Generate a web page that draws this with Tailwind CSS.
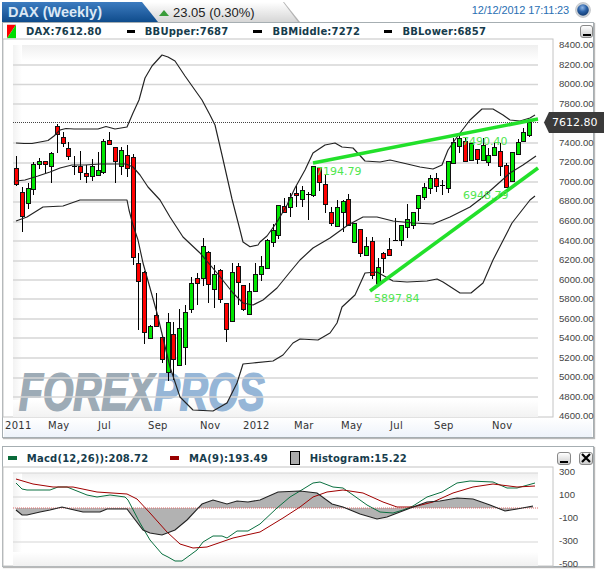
<!DOCTYPE html>
<html>
<head>
<meta charset="utf-8">
<script src="https://cdn.jsdelivr.net/npm/@tailwindcss/browser@4"></script>
</head>
<body class="w-[605px] h-[569px] overflow-hidden bg-white font-['Liberation_Sans',Arial,sans-serif]">
<header class="flex h-[22px] pt-[2px] pl-[2px] relative">
  <div class="w-[156px] h-[20px] pl-[6px] pt-[1px] bg-gradient-to-b from-[#3c7cc0] to-[#0e4c8c] [clip-path:polygon(0_0,140px_0,100%_100%,0_100%)] text-[14.5px] leading-[19px] font-bold text-[#dbe8f5] whitespace-nowrap z-10">DAX (Weekly)</div>
  <div class="w-[160px] h-[20px] -ml-[18px] bg-[#b4b4b4] [clip-path:polygon(0_0,144px_0,100%_100%,0_100%)]">
    <div class="h-full pt-[1px] bg-gradient-to-b from-white to-[#d6d6d6] [clip-path:polygon(0_0,143px_0,158px_100%,0_100%)] flex items-center pl-[19px] gap-[4px]">
      <svg width="10" height="6" viewBox="0 0 10 6" class="block"><polygon points="0,6 5,0 10,6" fill="#3a9c3a"/></svg>
      <span class="text-[13px] leading-[18px] text-[#222] whitespace-nowrap">23.05 (0.30%)</span>
    </div>
  </div>
  <div class="flex items-center ml-auto mr-[14px] gap-[6px] h-[16px]">
    <span class="text-[11px] tracking-[-0.15px] text-[#2a6fb3] whitespace-nowrap">12/12/2012 17:11:23</span>
    <svg width="16" height="16" viewBox="0 0 16 16" class="block">
      <defs><radialGradient id="ball" cx="45%" cy="30%" r="70%"><stop offset="0" stop-color="#8fb6e6"/><stop offset=".5" stop-color="#2b62a8"/><stop offset="1" stop-color="#123a70"/></radialGradient></defs>
      <circle cx="8" cy="8" r="7.5" fill="#d0d4d8" stroke="#b0b4b8" stroke-width=".6"/><circle cx="8" cy="8" r="5.8" fill="url(#ball)"/>
    </svg>
  </div>
</header>

<section class="relative ml-[2px] w-[592px] h-[416px] border border-[#a6aeb2] shadow-[1px_1px_1px_#b8b8b8] bg-white">
  <div class="flex items-center h-[16px] font-['DejaVu_Sans',sans-serif] text-[10px] font-bold tracking-[.2px] text-[#163c4c] whitespace-nowrap">
    <svg width="10" height="15" viewBox="0 0 10 15" class="block ml-[4px]"><polygon points="0,0 10,0 0,15" fill="#f00"/><polygon points="10,0 10,15 0,15" fill="#0d0"/></svg>
    <span class="ml-[10px]">DAX:7612.80</span>
    <i class="block w-[9px] h-[3px] bg-black ml-[25px]"></i><span class="ml-[10px]">BBUpper:7687</span>
    <i class="block w-[9px] h-[3px] bg-black ml-[25px]"></i><span class="ml-[11px]">BBMiddle:7272</span>
    <i class="block w-[9px] h-[3px] bg-black ml-[24px]"></i><span class="ml-[10px]">BBLower:6857</span>
    <button class="ml-[94px] w-[14px] h-[13px] rounded-[3px] border border-[#888] bg-gradient-to-b from-white to-[#ccc] flex items-end justify-center pb-[1px]"><i class="block w-[8px] h-[2px] bg-black"></i></button>
  </div>
  <svg id="main" width="611" height="399" viewBox="3 39 611 399" class="block overflow-visible font-['Liberation_Sans',sans-serif]"></svg>
</section>

<section class="relative mt-[8px] ml-[2px] w-[592px] h-[121px] border border-[#a6aeb2] shadow-[1px_1px_1px_#b8b8b8] bg-white">
  <div class="flex items-center h-[20px] pt-[2px] font-['DejaVu_Sans',sans-serif] text-[10px] font-bold tracking-[.2px] text-[#163c4c] whitespace-nowrap">
    <i class="block w-[9px] h-[4px] bg-[#0a6b3a] ml-[5px]"></i><span class="ml-[10px]">Macd(12,26)):208.72</span>
    <i class="block w-[9px] h-[4px] bg-[#990000] ml-[22px]"></i><span class="ml-[10px]">MA(9):193.49</span>
    <i class="block w-[10px] h-[14px] bg-[#aaa] border border-black ml-[22px]"></i><span class="ml-[10px]">Histogram:15.22</span>
    <div class="flex gap-[8px] ml-[150px]">
      <button class="w-[14px] h-[13px] rounded-[3px] border border-[#888] bg-gradient-to-b from-white to-[#ccc] flex items-end justify-center pb-[1px]"><i class="block w-[8px] h-[2px] bg-black"></i></button>
      <button class="w-[14px] h-[13px] rounded-[3px] border border-[#888] bg-gradient-to-b from-white to-[#ccc] flex items-center justify-center"><svg width="10" height="10" viewBox="0 0 10 10" class="block"><path d="M1 1L9 9M9 1L1 9" stroke="#000" stroke-width="2.2"/></svg></button>
    </div>
  </div>
  <svg id="sub" width="590" height="100" viewBox="3 467 590 100" class="block overflow-visible font-['Liberation_Sans',sans-serif]"></svg>
</section>

<script>
const R='r',G='g';
// colour, body top, body bottom, wick top, wick bottom (page pixels)
const C=[[R,168,184,156,186],[R,192,216,187,232],[G,188,203,183,209],[G,164,189,162,195],[G,161,164,158,169],[R,161,164,161,173],[G,153,166,152,183],[R,126,134,124,153],[R,137,143,132,147],[R,148,156,142,160],
['d',166,167,156,175],[R,166,172,151,180],[R,173,176,165,183],[G,166,176,159,181],[G,170,175,152,175],[G,141,172,139,174],[R,140,144,132,144],[R,147,161,147,183],[G,150,166,147,175],[R,155,168,145,177],
[R,157,257,154,265],[R,263,281,253,330],[R,272,332,271,344],[G,326,338,325,338],[R,315,326,293,326],[R,337,359,336,363],[G,322,372,313,381],[R,334,359,322,380],[G,328,365,309,366],[G,312,347,305,365],
[G,283,309,277,313],[R,278,283,273,305],[G,246,278,238,286],[R,252,284,251,303],[G,274,289,265,308],[R,270,299,269,303],[R,303,329,303,342],[G,272,321,263,322],[R,266,282,263,305],[R,285,309,285,311],
[G,291,314,283,315],[G,274,291,263,292],[G,266,274,256,281],[G,240,268,239,269],[G,230,242,224,247],[G,205,235,205,239],[R,206,212,198,213],[G,197,207,193,217],[R,193,195,186,207],[G,190,199,186,207],
['d',194,195,192,220],[G,166,195,166,197],[R,167,182,167,191],[R,184,204,175,213],[R,212,223,207,226],[G,207,226,200,226],[G,201,212,200,232],[R,199,225,194,226],[G,223,242,223,242],[R,229,253,229,257],
[G,246,255,237,255],[R,241,275,237,279],[G,267,283,258,284],[R,253,258,252,273],[R,249,255,238,255],['d',240,241,218,241],[G,225,240,225,246],[G,219,227,204,238],[G,212,225,212,229],[G,195,208,195,221],
[G,187,197,183,200],[G,178,188,175,194],[R,178,186,173,192],['d',185,187,180,195],[G,161,188,161,193],[G,142,163,138,163],[G,138,146,135,153],[R,141,161,138,162],[G,143,160,143,160],[R,149,159,149,164],
[G,145,160,138,160],[G,155,162,148,166],[G,147,155,142,156],[R,151,166,143,176],[R,165,187,163,188],[G,152,181,152,181],[G,142,154,139,155],[G,132,141,128,141],[G,122,135,122,137]];
const up='16,143 24,143.5 32,143.5 40,142 48,140.5 54,136 60,130 66,128.5 74,129 85,129 98,129 106,126.5 115,129 127,127 133,113 139,100 145,78 152,66 162,55 168,57 175,61 185,76 202,100 210,115 215,125 222,155 232,199 240,230 243,242 250,246.7 258,245 260,242 267,236 277,222 287,205 295,188 305,170 313,153 325,145 335,143 342,147 353,148 365,161 380,162 390,160 403,163 420,167 433,169 442,165 448,150 457,137 470,120 482,109 493,109 503,115 510,120 520,121 530,118 535,115';
const mid='16,181 25,180 38,176 50,172 60,168 72,165 85,165 100,164 115,164 126,164 133,167 140,175 148,187 160,200 170,217 183,237 200,253 217,273 233,293 243,303 253,305 263,300 277,288 290,272 300,260 313,248 330,238 348,225 363,217 377,217 393,221 413,223 433,224 450,217 470,207 483,197 500,182 510,173 523,165 536,156';
const low='16,221 27,217 43,207 63,206 80,200 97,200 127,200 129,210 133,225 138,240 143,263 157,313 170,367 180,397 193,410 213,411 227,403 237,383 243,364 253,363 273,361 283,355 293,343 300,339 318,340 330,333 337,323 342,307 355,295 365,273 377,272 393,281 407,282 427,281 437,279 443,282 460,293 471,293 483,283 493,260 512,223 530,200 535,196';
const gl=[65,84.5,104,143,163,182,202,222,241,261,280,299,319,338,358,378,397];
const ax=[[8400,48],[8200,68],[8000,87],[7800,107],[7400,146],[7200,165],[7000,185],[6800,204],[6600,224],[6400,244],[6200,263],[6000,283],[5800,302],[5600,322],[5400,341],[5200,361],[5000,380],[4800,400],[4600,419]];
const xl=[['2011',5],['May',48],['Jul',98],['Sep',148],['Nov',200],['2012',243],['Mar',294],['May',341],['Jul',390],['Sep',434],['Nov',492]];
let s=`<defs><linearGradient id="ft" x1="0" y1="0" x2="0" y2="1"><stop offset="0" stop-color="#efefef"/><stop offset="1" stop-color="#fff"/></linearGradient><linearGradient id="fl" x1="0" y1="0" x2="1" y2="0"><stop offset="0" stop-color="#f2f2f2"/><stop offset="1" stop-color="#fff"/></linearGradient><linearGradient id="fb" x1="0" y1="0" x2="0" y2="1"><stop offset="0" stop-color="#fff"/><stop offset="1" stop-color="#f2f2f2"/></linearGradient><linearGradient id="fa" x1="0" y1="0" x2="0" y2="1"><stop offset="0" stop-color="#fff"/><stop offset="1" stop-color="#eef3fa"/></linearGradient></defs>`;
s+=`<rect x="3" y="39" width="550" height="378" fill="#fff" stroke="#c4c4c4"/><rect x="13" y="45" width="525" height="372" fill="#fff"/><rect x="13" y="45" width="525" height="16" fill="url(#ft)"/><rect x="13" y="45" width="9" height="372" fill="url(#fl)"/><rect x="13" y="400" width="525" height="17" fill="url(#fb)"/><rect x="4" y="418" width="588" height="19" fill="url(#fa)"/>`;
s+=`<text transform="translate(19,410) scale(.767,1)" font-weight="bold" font-style="italic" font-size="51" stroke-width="1.8"><tspan fill="#9dabb6" stroke="#9dabb6">FOREX</tspan><tspan fill="#96b6d7" stroke="#96b6d7">PROS</tspan></text>`;
gl.forEach(y=>s+=`<line x1="13" x2="538" y1="${y}" y2="${y}" stroke="#d6d6d6" stroke-width="1.3"/>`);
s+=`<line x1="13" x2="538" y1="122.5" y2="122.5" stroke="#444" stroke-dasharray="1 1"/>`;
C.forEach((c,i)=>{const x=Math.round(16+5.833*i)+.5;
 s+=`<line x1="${x}" x2="${x}" y1="${c[3]}" y2="${c[4]}" stroke="#000"/>`;
 if(c[0]=='d') s+=`<line x1="${x-2.5}" x2="${x+2.5}" y1="${c[1]+.5}" y2="${c[1]+.5}" stroke="#000"/>`;
 else s+=`<rect x="${x-2}" y="${c[1]+.5}" width="4" height="${c[2]-c[1]}" fill="${c[0]=='r'?'#f00':'#00e600'}" stroke="#111"/>`;});
[up,mid,low].forEach(p=>s+=`<polyline points="${p}" fill="none" stroke="#222" stroke-width="1.15" stroke-linejoin="round"/>`);
s+=`<line x1="313" y1="163" x2="538" y2="119" stroke="#22e02a" stroke-width="3.6"/><line x1="370" y1="291" x2="538" y2="168" stroke="#22e02a" stroke-width="3.6"/>`;
s+=`<g font-family="DejaVu Sans" font-size="11" fill="#50e650"><text x="316" y="175">7194.79</text><text x="462" y="145">7490.40</text><text x="463" y="199">6948.79</text><text x="374" y="302">5897.84</text></g>`;
s+=`<polygon points="544,122.5 549,112 604,112 604,133 549,133" fill="#3a3a3a"/><text x="552" y="126" font-family="DejaVu Sans" font-size="11" fill="#fff">7612.80</text>`;
ax.forEach(a=>s+=`<text x="559" y="${a[1]}" font-size="9.6" fill="#444">${a[0]}.00</text>`);
xl.forEach(a=>s+=`<text x="${a[1]}" y="429" font-family="DejaVu Sans" font-size="10" letter-spacing=".3" fill="#333">${a[0]}</text>`);
document.getElementById('main').innerHTML=s;

const ma='16,483 22,489 27,490 50,490 58,487 67,487 87,495 97,497 110,495 125,497 128,500 140,523 150,540 162,554 168,557 175,561 182,561 197,550 203,542 213,536 222,536 227,538 237,531 248,531 260,524 277,508 290,497 300,491 313,483 320,482 333,487 343,488 353,495 367,505 380,512 393,513 403,510 413,506 427,497 442,492 457,483 470,481 493,482 507,488 517,488 535,483';
const rd='16,479 33,484 53,487 73,487 97,492 127,494 137,499 150,513 167,532 180,544 193,548 207,547 233,538 260,532 283,518 300,507 313,497 327,492 343,490 363,493 383,502 397,507 413,507 433,502 453,493 473,487 493,484 517,487 535,486';
const hi='16,510 22,515 27,515 40,512 50,510 62,507 70,509 83,512 100,512 107,509 127,509 133,517 143,530 150,533 162,535 175,530 187,520 202,504 213,500 227,504 237,501 248,502 260,500 278,492 300,491 317,493 332,504 343,507 360,514 377,519 387,517 413,507 427,502 440,501 457,498 473,499 490,505 505,511 517,509 533,506';
let t=`<defs><linearGradient id="ft2" x1="0" y1="0" x2="0" y2="1"><stop offset="0" stop-color="#efefef"/><stop offset="1" stop-color="#fff"/></linearGradient><linearGradient id="fl2" x1="0" y1="0" x2="1" y2="0"><stop offset="0" stop-color="#f2f2f2"/><stop offset="1" stop-color="#fff"/></linearGradient><linearGradient id="fb2" x1="0" y1="0" x2="0" y2="1"><stop offset="0" stop-color="#fff"/><stop offset="1" stop-color="#f0f0f0"/></linearGradient></defs>`;
t+=`<rect x="3" y="467" width="550" height="99" fill="#fff" stroke="#c4c4c4"/><rect x="13" y="473" width="525" height="12" fill="url(#ft2)"/><rect x="13" y="473" width="9" height="93" fill="url(#fl2)"/><rect x="13" y="552" width="525" height="14" fill="url(#fb2)"/>`;
[473,497,519,542].forEach(y=>t+=`<line x1="13" x2="538" y1="${y}" y2="${y}" stroke="#d6d6d6" stroke-width="1.2"/>`);
t+=`<polygon points="16,508 ${hi} 533,508" fill="#b2b2b2"/>`;
t+=`<line x1="13" x2="538" y1="508" y2="508" stroke="#e06868" stroke-dasharray="1 1"/>`;
t+=`<polyline points="${ma}" fill="none" stroke="#0a7040" stroke-width="1"/><polyline points="${rd}" fill="none" stroke="#a00000" stroke-width="1"/><polyline points="${hi}" fill="none" stroke="#222" stroke-width="1.1"/>`;
[['300',475],['100',498],['-100',521],['-300',544],['-500',567]].forEach(a=>t+=`<text x="559" y="${a[1]}" font-size="9.6" fill="#444">${a[0]}</text>`);
document.getElementById('sub').innerHTML=t;
</script>
</body>
</html>
